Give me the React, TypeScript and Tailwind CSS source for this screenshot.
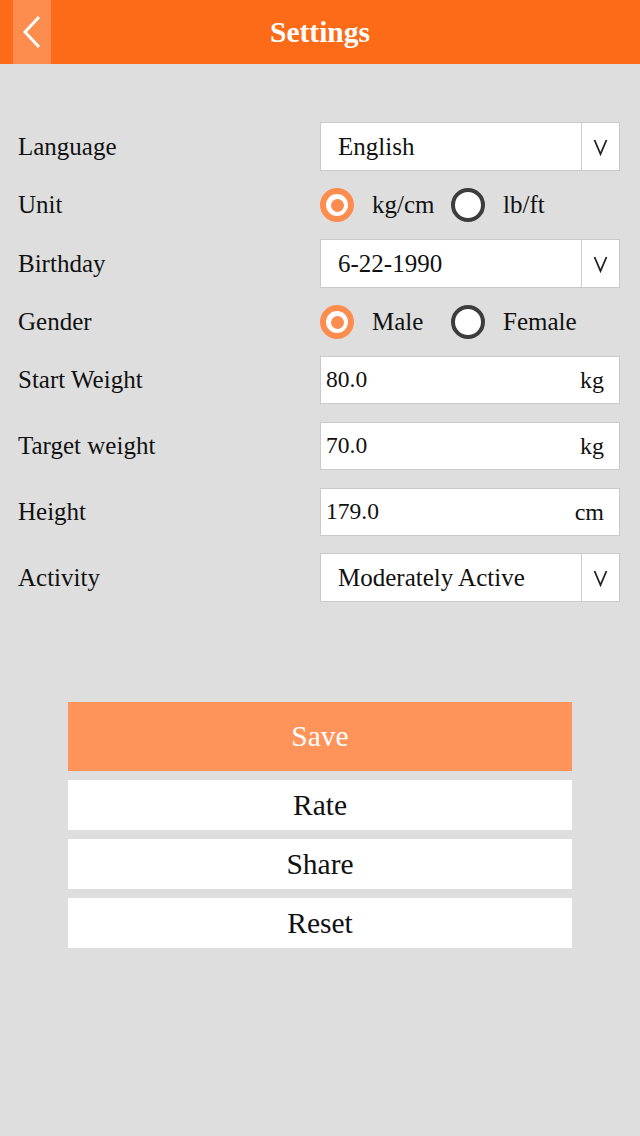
import React from "react";

function Chevron() {
  return (
    <svg width="15" height="18" viewBox="0 0 15 18" className="text-[#222]">
      <polyline points="1.5,2 7.5,16 13.5,2" fill="none" stroke="currentColor" strokeWidth="1.8" />
    </svg>
  );
}

function Radio({ on }: { on: boolean }) {
  return on ? (
    <div className="w-[34px] h-[34px] rounded-full bg-[#fd8c4f] flex items-center justify-center">
      <div className="w-[22px] h-[22px] rounded-full bg-white flex items-center justify-center">
        <div className="w-[13px] h-[13px] rounded-full bg-[#fd8c4f]" />
      </div>
    </div>
  ) : (
    <div className="w-[34px] h-[34px] rounded-full border-[4px] border-[#3d3d3d] bg-white" />
  );
}

function Row({ label, children, className }: { label: string; children: React.ReactNode; className?: string }) {
  return (
    <div className={"flex items-center " + (className ?? "")}>
      <div className="flex-1 pl-[18px] text-[25px] text-[#111]">{label}</div>
      <div className="w-[300px] mr-[20px]">{children}</div>
    </div>
  );
}

function Select({ value }: { value: string }) {
  return (
    <div className="h-[49px] bg-white border border-[#c9c9c9] flex items-center">
      <div className="flex-1 pl-[17px] text-[25px] text-[#111]">{value}</div>
      <div className="w-[38px] h-full border-l border-[#cfcfcf] flex items-center justify-center">
        <Chevron />
      </div>
    </div>
  );
}

function Field({ value, unit }: { value: string; unit: string }) {
  return (
    <div className="h-[48px] bg-white border border-[#c9c9c9] flex items-center justify-between pl-[5px] pr-[15px]">
      <span className="text-[23.5px] text-[#111]">{value}</span>
      <span className="text-[24px] text-[#111]">{unit}</span>
    </div>
  );
}

function RadioGroup({ a, b }: { a: string; b: string }) {
  return (
    <div className="h-[48px] flex items-center text-[25px] text-[#111]">
      <Radio on />
      <span className="ml-[18px] w-[79px]">{a}</span>
      <Radio on={false} />
      <span className="ml-[18px]">{b}</span>
    </div>
  );
}

export default function App() {
  return (
    <div className="w-[640px] h-[1136px] bg-[#dedede] flex flex-col font-['Liberation_Serif','Times_New_Roman',serif]">
      <div className="h-[64px] bg-[#fd6a18] relative flex items-center justify-center">
        <div className="absolute left-[13px] top-0 w-[38px] h-full bg-[#fd8c4f] flex items-center justify-center">
          <svg width="22" height="34" viewBox="0 0 22 34">
            <polyline points="18,2 4,17 18,32" fill="none" stroke="white" strokeWidth="3" />
          </svg>
        </div>
        <span className="text-white text-[29.5px] font-bold">Settings</span>
      </div>

      <div className="mt-[58px] flex flex-col">
        <Row label="Language">
          <Select value="English" />
        </Row>
        <Row label="Unit" className="mt-[10px]">
          <RadioGroup a="kg/cm" b="lb/ft" />
        </Row>
        <Row label="Birthday" className="mt-[10px]">
          <Select value="6-22-1990" />
        </Row>
        <Row label="Gender" className="mt-[10px]">
          <RadioGroup a="Male" b="Female" />
        </Row>
        <Row label="Start Weight" className="mt-[10px]">
          <Field value="80.0" unit="kg" />
        </Row>
        <Row label="Target weight" className="mt-[18px]">
          <Field value="70.0" unit="kg" />
        </Row>
        <Row label="Height" className="mt-[18px]">
          <Field value="179.0" unit="cm" />
        </Row>
        <Row label="Activity" className="mt-[17px]">
          <Select value="Moderately Active" />
        </Row>
      </div>

      <div className="mt-[100px] mx-[68px] flex flex-col">
        <div className="h-[69px] bg-[#ff945a] flex items-center justify-center text-white text-[29.5px]">Save</div>
        <div className="mt-[9px] h-[50px] bg-white flex items-center justify-center text-[29.5px] text-[#111]">Rate</div>
        <div className="mt-[9px] h-[50px] bg-white flex items-center justify-center text-[29.5px] text-[#111]">Share</div>
        <div className="mt-[9px] h-[50px] bg-white flex items-center justify-center text-[29.5px] text-[#111]">Reset</div>
      </div>
    </div>
  );
}
